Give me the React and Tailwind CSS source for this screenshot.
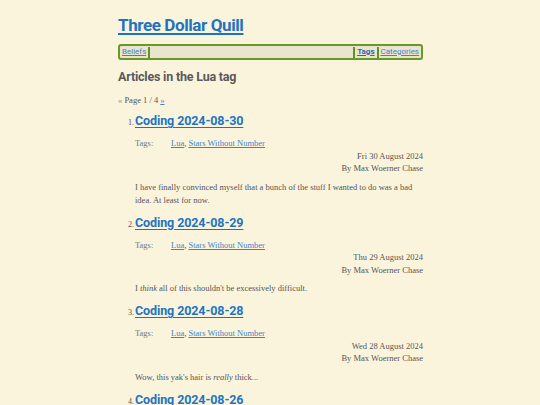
const articles = [
  {
    num: 1,
    title: "Coding 2024-08-30",
    date: "Fri 30 August 2024",
    excerpt: (
      <>I have finally convinced myself that a bunch of the stuff I wanted to do was a bad idea. At least for now.</>
    ),
  },
  {
    num: 2,
    title: "Coding 2024-08-29",
    date: "Thu 29 August 2024",
    excerpt: (
      <>
        I <em>think</em> all of this shouldn't be excessively difficult.
      </>
    ),
  },
  {
    num: 3,
    title: "Coding 2024-08-28",
    date: "Wed 28 August 2024",
    excerpt: (
      <>
        Wow, this yak's hair is <em>really</em> thick...
      </>
    ),
  },
  {
    num: 4,
    title: "Coding 2024-08-26",
    date: "Mon 26 August 2024",
    excerpt: <>More work.</>,
  },
];

const sans = "font-['Roboto',sans-serif]";
const serif = "font-['Liberation_Serif',serif]";

function Sep() {
  return <span className="inline-block w-[2px] h-[11px] bg-[#5f9420] mx-[2px]" />;
}

export default function App() {
  return (
    <div className="min-h-[405px] bg-[#fbf4dd] text-[#555]">
      <div className="w-[305px] ml-[118px] pt-[14px]">
        {/* HEADER */}
        <h1 className={`${sans} text-[17px] font-bold leading-[22px] tracking-[-0.4px]`}>
          <a href="#" className="text-[#1f74c2] underline decoration-[1.5px] underline-offset-2">
            Three Dollar Quill
          </a>
        </h1>

        {/* NAV */}
        <nav
          className={`${sans} mt-[8px] h-[16px] border-2 border-[#679a25] rounded-[3px] bg-[#ebe4cf] flex items-center px-[2px] text-[8px]`}
        >
          <a href="#" className="text-[#3f85c6] underline">Beliefs</a>
          <Sep />
          <div className="flex-1" />
          <Sep />
          <a href="#" className="text-[#2a6aa8] font-bold underline">Tags</a>
          <Sep />
          <a href="#" className="text-[#3f85c6] underline">Categories</a>
        </nav>

        {/* TITLE */}
        <h2 className={`${sans} mt-[8px] text-[12.5px] font-bold leading-[18px] text-[#5a5a5a] tracking-[-0.2px]`}>
          Articles in the Lua tag
        </h2>

        <p className={`${serif} mt-[8px] text-[8.5px] leading-[12px] text-[#555]`}>
          <span className="text-[#888]">«</span> Page 1 / 4{" "}
          <a href="#" className="text-[#3f85c6] underline">»</a>
        </p>

        {/* LIST */}
        <ol className="mt-[6px]">
          {articles.map((a) => (
            <li key={a.num} className="pl-[17px] mb-[7px]">
              <div className="flex items-baseline">
                <span className={`${serif} text-[8px] w-[7px] -ml-[7px] text-[#555]`}>{a.num}.</span>
                <a
                  href="#"
                  className={`${sans} text-[12.5px] font-bold leading-[18px] text-[#1f74c2] underline underline-offset-2 tracking-[-0.1px]`}
                >
                  {a.title}
                </a>
              </div>
              <div className={`${serif} text-[8.5px] leading-[12.5px] mt-[7px] text-[#555]`}>
                <div className="flex">
                  <span className="w-[36px] text-[#777]">Tags:</span>
                  <span>
                    <a href="#" className="text-[#3f85c6] underline">Lua</a>,{" "}
                    <a href="#" className="text-[#3f85c6] underline">Stars Without Number</a>
                  </span>
                </div>
                <div className="text-right">{a.date}</div>
                <div className="text-right">By Max Woerner Chase</div>
                <p className="mt-[6px] leading-[13px]">{a.excerpt}</p>
              </div>
            </li>
          ))}
        </ol>
      </div>
    </div>
  );
}
